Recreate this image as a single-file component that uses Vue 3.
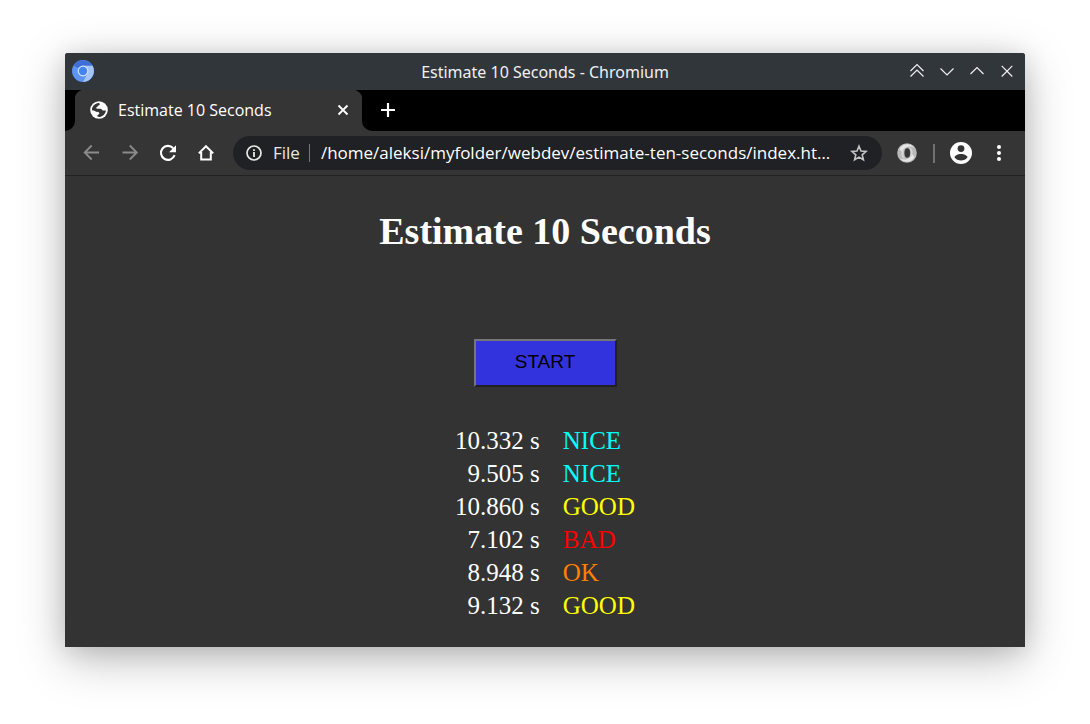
<script setup>
import { ref } from 'vue'

const address = ref('/home/aleksi/myfolder/webdev/estimate-ten-seconds/index.html')

const results = [
  { time: '10.332 s', grade: 'NICE' },
  { time: '9.505 s', grade: 'NICE' },
  { time: '10.860 s', grade: 'GOOD' },
  { time: '7.102 s', grade: 'BAD' },
  { time: '8.948 s', grade: 'OK' },
  { time: '9.132 s', grade: 'GOOD' },
]
</script>

<template>
  <div class="desktop">
    <div class="window">
      <header class="titlebar">
        <div class="side">
          <svg class="logo" viewBox="0 0 22 22" width="22" height="22" aria-hidden="true">
            <circle cx="11" cy="11" r="11" fill="#5d93f2" />
            <path d="M11 11 L1.6 5.4 A11 11 0 0 1 20.6 5.8 L11 5.8 Z" fill="#3f6fd6" />
            <path d="M11 5.8 H20.6 A11 11 0 0 1 11 22 L15.5 13.6 Z" fill="#a5c5fa" />
            <circle cx="11" cy="11" r="5.4" fill="#d3e2fc" />
            <circle cx="11" cy="11" r="4.2" fill="#4584f0" />
          </svg>
        </div>
        <span class="caption">Estimate 10 Seconds - Chromium</span>
        <div class="side end">
          <button class="plain control" aria-label="Keep above">
            <svg viewBox="0 0 16 16" width="16" height="16"><path d="M1.5 8 L8 1.5 L14.5 8 M1.5 13.5 L8 7 L14.5 13.5" /></svg>
          </button>
          <button class="plain control" aria-label="Minimize">
            <svg viewBox="0 0 16 16" width="16" height="16"><path d="M1.5 5.5 L8 12 L14.5 5.5" /></svg>
          </button>
          <button class="plain control" aria-label="Maximize">
            <svg viewBox="0 0 16 16" width="16" height="16"><path d="M1.5 11 L8 4.5 L14.5 11" /></svg>
          </button>
          <button class="plain control" aria-label="Close">
            <svg viewBox="0 0 16 16" width="16" height="16"><path d="M2.7 2.9 L13.3 13.5 M13.3 2.9 L2.7 13.5" /></svg>
          </button>
        </div>
      </header>

      <div class="tabs">
        <div class="tab-lead"></div>
        <div class="tab">
          <svg viewBox="0 0 18 18" width="18" height="18" aria-hidden="true">
            <circle cx="9" cy="9" r="8.8" fill="#fff" />
            <path d="M8.800 2 C10.300 2.500 10 4 8.600 4.400 C7.500 4.700 8 5.700 6.800 6 C5.800 6.400 6 7.700 7.400 7.700 L10.500 7.700 C12.200 7.800 11.600 9.500 13.200 9.600 L15.900 9.500 C15.700 12.300 13.400 15.300 10 15.900 C8 16.100 7 15.500 7.300 14.600 C7.600 13.500 9.500 13.600 9.400 12.300 C9.200 10.700 7.200 11 6.200 10.700 C4.800 10.300 4 9.300 2 9.300 C1.700 5.600 4.700 2.100 8.800 2 Z" fill="#353535" />
          </svg>
          <span class="tab-title">Estimate 10 Seconds</span>
          <button class="plain" aria-label="Close tab">
            <svg viewBox="0 0 12 12" width="12" height="12"><path d="M1.5 1.5 L10.5 10.5 M10.5 1.5 L1.5 10.5" fill="none" stroke="#fff" stroke-width="1.8" /></svg>
          </button>
        </div>
        <div class="tab-rest">
          <button class="plain" aria-label="New tab">
            <svg viewBox="0 0 16 16" width="16" height="16"><path d="M8 1 V15 M1 8 H15" fill="none" stroke="#fff" stroke-width="2.2" /></svg>
          </button>
        </div>
      </div>

      <nav class="toolbar">
        <div class="nav">
          <button class="plain" aria-label="Back">
            <svg viewBox="0 0 18 18" width="18" height="18"><path d="M16 8.500 H2 M8.700 1.500 L1.700 8.500 L8.700 15.500" fill="none" stroke="#8b8b8b" stroke-width="1.8" /></svg>
          </button>
          <button class="plain" aria-label="Forward">
            <svg viewBox="0 0 18 18" width="18" height="18"><path d="M1.500 8.500 H15.500 M8.800 1.500 L15.800 8.500 L8.800 15.500" fill="none" stroke="#8b8b8b" stroke-width="1.8" /></svg>
          </button>
          <button class="plain" aria-label="Reload">
            <svg viewBox="0 0 18 18" width="18" height="18">
              <path d="M14.2 4.2 A7 7 0 1 0 15.6 11.2" fill="none" stroke="#fff" stroke-width="2.1" />
              <path d="M17 1.2 V8.2 H10 Z" fill="#fff" />
            </svg>
          </button>
          <button class="plain" aria-label="Home">
            <svg viewBox="0 0 18 18" width="18" height="18"><path d="M1.8 9.4 L9 2.2 L16.2 9.4 M4.2 8 V15.600 H13.8 V8" fill="none" stroke="#fff" stroke-width="2" /></svg>
          </button>
        </div>

        <div class="omnibox">
          <svg viewBox="0 0 16 16" width="16" height="16" aria-hidden="true">
            <circle cx="8" cy="8" r="7" fill="none" stroke="#e8e8e8" stroke-width="1.7" />
            <path d="M7.1 7 H8.9 V12 H7.1 Z M7.1 4.2 H8.9 V5.9 H7.1 Z" fill="#e8e8e8" />
          </svg>
          <label class="scheme" for="address">File</label>
          <input id="address" v-model="address" class="address" type="text" spellcheck="false" />
          <button class="plain" aria-label="Bookmark this page">
            <svg viewBox="0 0 18 18" width="18" height="18"><path d="M9 2.2 L11 7 L16.1 7.4 L12.2 10.8 L13.4 15.8 L9 13.1 L4.6 15.8 L5.8 10.8 L1.9 7.4 L7 7 Z" fill="none" stroke="#c4c4c4" stroke-width="1.6" /></svg>
          </button>
        </div>

        <button class="plain extension" aria-label="Extension">
          <svg viewBox="0 0 20 20" width="20" height="20">
            <circle cx="10" cy="10" r="9.800" fill="#b9b9b9" />
            <path d="M2.500 6 C5 0.500 13 -0.500 17 4.500 C13.500 2.500 7 3 5 9 Z" fill="#e6e6e6" />
            <path d="M17.500 14 C15 19.500 7 20.500 3 15.500 C6.500 17.500 13 17 15 11 Z" fill="#e6e6e6" />
            <path d="M5 8 C3.500 11 5 15 8 16.500 C6.500 14 6 11 7 7 Z M15 12 C16.500 9 15 5 12 3.500 C13.500 6 14 9 13 13 Z" fill="#d4d4d4" />
            <ellipse cx="10.300" cy="10" rx="2.900" ry="4.800" fill="#353535" />
          </svg>
        </button>
        <span class="divider"></span>
        <button class="plain profile" aria-label="Profile">
          <svg viewBox="0 0 24 24" width="22" height="22">
            <circle cx="12" cy="12" r="12" fill="#fff" />
            <circle cx="12" cy="7.200" r="3.700" fill="#353535" />
            <path d="M12 13.200 C8.700 13.200 5.300 14.800 4.900 16.500 C8 21.300 16 21.300 19.100 16.500 C18.700 14.800 15.300 13.200 12 13.200 Z" fill="#353535" />
          </svg>
        </button>
        <button class="plain menu" aria-label="Menu">
          <svg viewBox="0 0 4 16" width="4" height="16"><g fill="#fff"><circle cx="2" cy="2" r="2" /><circle cx="2" cy="8" r="2" /><circle cx="2" cy="14" r="2" /></g></svg>
        </button>
      </nav>

      <main class="page">
        <h1>Estimate 10 Seconds</h1>
        <button class="start">START</button>
        <table>
          <tbody>
            <tr v-for="(row, i) in results" :key="i">
              <td class="time">{{ row.time }}</td>
              <td class="grade" :class="row.grade.toLowerCase()">{{ row.grade }}</td>
            </tr>
          </tbody>
        </table>
      </main>
    </div>
  </div>
</template>

<style>
body {
  margin: 0;
  background: #fff;
}
</style>

<style scoped>
.desktop {
  box-sizing: border-box;
  min-height: 100vh;
  padding: 53px 65px 77px;
  display: flex;
  overflow: hidden;
}
.window {
  flex: 1;
  min-width: 0;
  display: flex;
  flex-direction: column;
  background: #333;
  border-radius: 3px 3px 0 0;
  box-shadow: 0 12px 48px rgba(0, 0, 0, 0.26), 0 3px 24px rgba(0, 0, 0, 0.12);
  font: 16px/22px "Noto Sans", sans-serif;
  color: #fff;
}
svg {
  display: block;
}
.plain {
  padding: 0;
  border: 0;
  background: none;
}
.titlebar {
  display: flex;
  align-items: center;
  height: 37px;
  padding: 0 7px;
  background: #31363b;
  border-radius: 3px 3px 0 0;
}
.side {
  flex: 1 1 0;
  box-sizing: border-box;
  display: flex;
  padding-bottom: 2px;
}
.end {
  justify-content: flex-end;
  gap: 14px;
}
.end .control:last-child {
  margin-right: 3px;
}
.caption {
  color: #eff0f1;
}
.control path {
  fill: none;
  stroke: #eff0f1;
  stroke-width: 1.2;
}
.tabs {
  display: flex;
  height: 41px;
  background: #353535;
}
.tab-lead {
  width: 10px;
  background: #000;
  border-bottom-right-radius: 10px;
}
.tab {
  box-sizing: border-box;
  width: 287px;
  display: flex;
  align-items: center;
  gap: 10px;
  padding: 0 13px 1px 15px;
  background: radial-gradient(circle at 10px 10px, #353535 10px, #000 11px) 0 0 / 10px 10px no-repeat,
    radial-gradient(circle at 0 10px, #353535 10px, #000 11px) 100% 0 / 10px 10px no-repeat;
}
.tab-title {
  flex: 1;
  font-family: "Open Sans", sans-serif;
}
.tab-rest {
  flex: 1;
  display: flex;
  align-items: center;
  padding: 0 0 1px 18px;
  background: #000;
  border-bottom-left-radius: 10px;
}
.toolbar {
  display: flex;
  align-items: center;
  height: 44px;
  padding: 0 24px 0 18px;
  background: #353535;
  border-bottom: 1px solid #222;
}
.nav {
  display: flex;
  gap: 20px;
  margin-right: 18px;
}
.omnibox {
  flex: 1;
  min-width: 0;
  display: flex;
  align-items: center;
  height: 34px;
  padding: 0 14px 0 13px;
  background: #202124;
  border-radius: 17px;
  font-family: "Open Sans", sans-serif;
  font-size: 17px;
}
.scheme {
  margin-left: 11px;
  padding-right: 9px;
  border-right: 1px solid #77787a;
  line-height: 18px;
  color: #e8e8e8;
}
.address {
  flex: 1;
  min-width: 0;
  margin: 0 15px 0 11px;
  padding: 0;
  border: 0;
  outline: 0;
  background: none;
  color: #fff;
  font: inherit;
  text-overflow: ellipsis;
}
.extension {
  margin-left: 15px;
}
.divider {
  width: 2px;
  height: 19px;
  margin: 0 15px 0 16px;
  background: #727272;
}
.menu {
  margin-left: 25px;
}
.page {
  flex: 1;
  display: flex;
  flex-direction: column;
  align-items: center;
  padding: 33px 0 22px;
  font-family: "Liberation Serif", serif;
}
h1 {
  margin: 0;
  font-size: 38px;
  line-height: 44px;
}
.start {
  width: 143px;
  height: 48px;
  margin: 86px 0 37px;
  padding: 0 0 2px;
  border: 2px solid;
  border-color: #767676 #212121 #212121 #767676;
  background: #33d;
  color: #000;
  font: 19px "Liberation Sans", sans-serif;
}
table {
  border-collapse: collapse;
  font-size: 25px;
  line-height: 33px;
}
td {
  padding: 0;
}
.time {
  text-align: right;
}
.grade {
  padding-left: 23px;
}
.nice {
  color: #0ff;
}
.good {
  color: #ff0;
}
.bad {
  color: #f00;
}
.ok {
  color: #ff8000;
}
</style>
